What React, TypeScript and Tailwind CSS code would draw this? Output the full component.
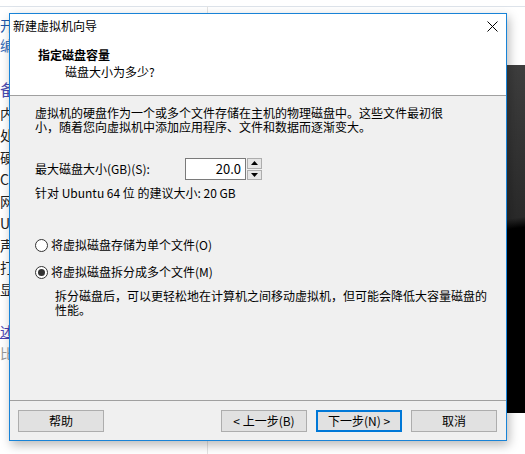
import React from "react";

const cjk = { fontFamily: '"Noto Sans CJK SC", "Noto Sans", sans-serif' };

function Radio({ checked }: { checked?: boolean }) {
  return (
    <span className="flex h-[13px] w-[13px] shrink-0 items-center justify-center rounded-full border border-[#333] bg-white">
      {checked && <span className="h-[7px] w-[7px] rounded-full bg-[#333]" />}
    </span>
  );
}

function Button({ label, primary }: { label: string; primary?: boolean }) {
  return (
    <button
      className={
        primary
          ? "flex h-[22px] w-[86px] items-center justify-center border-2 border-[#0078d7] bg-[#e1e1e1] text-[12px] text-black"
          : "flex h-[22px] w-[86px] items-center justify-center border border-[#adadad] bg-[#e1e1e1] text-[12px] text-black"
      }
    >
      {label}
    </button>
  );
}

export default function App() {
  return (
    <div className="relative h-[454px] w-[525px] overflow-hidden bg-white" style={cjk}>
      {/* desktop behind */}
      <div className="absolute left-0 right-0 top-[6px] h-px bg-[#dde3ea]" />
      <div className="absolute left-[207px] top-[6px] h-[448px] w-px bg-[#e3e3e3]" />
      <div className="absolute left-0 top-[14px] flex w-[14px] flex-col text-[14px] leading-[22px] text-[#222]">
        <span className="h-[20px] text-[#2457a8]">开</span>
        <span className="h-[24px] text-[#3d6fb8]">编</span>
        <span className="mt-[20px] h-[24px] text-[16px] text-[#4a4ab0]">备</span>
        <span>内</span>
        <span>处</span>
        <span>硬</span>
        <span>C</span>
        <span>网</span>
        <span>U</span>
        <span>声</span>
        <span>打</span>
        <span>显</span>
        <span className="mt-[20px] text-[#4b3fb0] underline">述</span>
        <span className="text-[#999]">比</span>
      </div>
      <div className="absolute left-[507px] top-[65px] h-[348px] w-[18px] bg-[linear-gradient(172deg,#3e3e3e_0%,#2a2a2a_44%,#000_47%,#000_100%)]" />

      {/* wizard window */}
      <div className="absolute left-[9px] top-[13px] flex h-[428px] w-[498px] flex-col border border-[#1883d7] bg-white shadow-[2px_4px_10px_rgba(0,0,0,0.28)]">
        <div className="flex h-[82px] flex-col border-b border-[#a0a0a0] bg-white">
          <div className="flex h-[24px] items-center justify-between pl-[3px] pr-[8px]">
            <span className="text-[12px] text-black">新建虚拟机向导</span>
            <svg width="11" height="11" viewBox="0 0 11 11">
              <path d="M0.5 0.5 L10.5 10.5 M10.5 0.5 L0.5 10.5" stroke="#000" strokeWidth="1" />
            </svg>
          </div>
          <div className="mt-[10px] pl-[28px] text-[12px] font-bold leading-[14px] text-black">指定磁盘容量</div>
          <div className="mt-[3px] pl-[55px] text-[12px] leading-[14px] text-black">磁盘大小为多少?</div>
        </div>

        <div className="flex flex-1 flex-col bg-[#f0f0f0] pl-[25px] pt-[10px] text-[12px] leading-[14px] text-black">
          <p>
            虚拟机的硬盘作为一个或多个文件存储在主机的物理磁盘中。这些文件最初很
            <br />
            小，随着您向虚拟机中添加应用程序、文件和数据而逐渐变大。
          </p>

          <div className="mt-[24px] flex h-[22px] items-center">
            <span className="w-[150px]">最大磁盘大小(GB)(S):</span>
            <div className="flex h-[22px] w-[61px] items-center justify-end border border-[#7a7a7a] bg-white pr-[4px] text-[13px]">
              20.0
            </div>
            <div className="flex h-[22px] w-[16px] flex-col gap-px pl-px">
              <span className="flex flex-1 items-center justify-center border border-[#adadad] bg-[#e5e5e5]">
                <svg width="7" height="4" viewBox="0 0 7 4">
                  <path d="M0 4 L3.5 0 L7 4 Z" fill="#000" />
                </svg>
              </span>
              <span className="flex flex-1 items-center justify-center border border-[#adadad] bg-[#e5e5e5]">
                <svg width="7" height="4" viewBox="0 0 7 4">
                  <path d="M0 0 L7 0 L3.5 4 Z" fill="#000" />
                </svg>
              </span>
            </div>
          </div>

          <p className="mt-[6px]">针对 Ubuntu 64 位 的建议大小: 20 GB</p>

          <div className="mt-[38px] flex items-center gap-[3px]">
            <Radio />
            <span>将虚拟磁盘存储为单个文件(O)</span>
          </div>
          <div className="mt-[13px] flex items-center gap-[3px]">
            <Radio checked />
            <span>将虚拟磁盘拆分成多个文件(M)</span>
          </div>
          <p className="mt-[10px] pl-[20px]">
            拆分磁盘后，可以更轻松地在计算机之间移动虚拟机，但可能会降低大容量磁盘的
            <br />
            性能。
          </p>
        </div>

        <div className="flex h-[40px] items-start border-t border-[#a0a0a0] bg-[#f0f0f0] pl-[8px] pr-[9px] pt-[9px]">
          <Button label="帮助" />
          <div className="flex-1" />
          <div className="flex gap-[9px]">
            <Button label="< 上一步(B)" />
            <Button label="下一步(N) >" primary />
            <Button label="取消" />
          </div>
        </div>
      </div>
    </div>
  );
}
